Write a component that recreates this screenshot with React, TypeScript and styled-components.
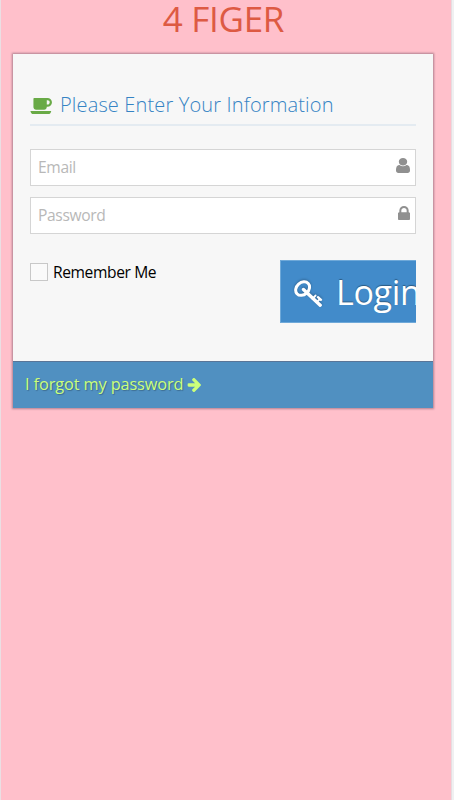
import React from 'react';
import styled, { createGlobalStyle } from 'styled-components';

const GlobalStyle = createGlobalStyle`
  * { box-sizing: border-box; }
  html, body { margin: 0; background: #f0f0f1; }
  body { font-family: "Open Sans", sans-serif; overflow: hidden; }
`;

const Page = styled.main`
  width: 452px;
  height: 800px;
  padding: 0 18px 0 12px;
  border-left: 1px solid #eadfe3;
  border-right: 1px solid #e6dde1;
  background: #ffc0cb;
`;

const Brand = styled.h1`
  height: 54px;
  margin: 0;
  padding: 0 0 0 1px;
  font-size: 35px;
  font-weight: 400;
  line-height: 38px;
  letter-spacing: -0.3px;
  text-align: center;
  color: #dd5a43;
`;

const Card = styled.section`
  width: 420px;
  box-shadow: 0 0 2px 1px rgba(70, 40, 60, 0.42);
`;

const CardBody = styled.form`
  height: 307px;
  padding: 38px 17px 0;
  background: #f7f7f7;
`;

const Heading = styled.h2`
  display: flex;
  align-items: center;
  gap: 8px;
  height: 34px;
  margin: 0 0 23px;
  padding-bottom: 6px;
  border-bottom: 2px solid #e4ebf1;
  font-size: 20px;
  font-weight: 300;
  line-height: 26px;
  letter-spacing: 0.15px;
  white-space: nowrap;
  color: #3583c4;
`;

const Field = styled.label`
  display: flex;
  align-items: center;
  height: 37px;
  margin-bottom: 11px;
  padding: 0 5px 2px 7px;
  border: 1px solid #d5d5d5;
  background: #fff;
  color: #909090;
`;

const Input = styled.input`
  flex: 1;
  min-width: 0;
  padding: 0;
  border: 0;
  outline: 0;
  background: transparent;
  font: 400 15.6px "Open Sans", sans-serif;
  letter-spacing: -0.35px;
  &::placeholder { color: #b8b8b8; opacity: 1; }
`;

const Actions = styled.div`
  display: flex;
  justify-content: space-between;
  margin-top: 26px;
  overflow: hidden;
`;

const Remember = styled.label`
  display: flex;
  align-items: center;
  gap: 5px;
  height: 24px;
  font-size: 15.6px;
  letter-spacing: -0.4px;
  color: #000;
`;

const Checkbox = styled.input`
  appearance: none;
  width: 18px;
  height: 18px;
  margin: 0;
  border: 1px solid #c8c8c8;
  background: #fafafa;
`;

const LoginButton = styled.button`
  display: flex;
  align-items: center;
  gap: 13px;
  width: 136px;
  height: 63px;
  padding: 1px 0 0 13px;
  overflow: hidden;
  border: solid #6fa9d9;
  border-width: 1px 0 1px 1px;
  background: #428bca;
  color: #fff;
  font: 400 34px "Open Sans", sans-serif;
  letter-spacing: -0.3px;
  text-shadow: 0 -1px 1px rgba(0, 0, 0, 0.35);
`;

const Toolbar = styled.footer`
  display: flex;
  align-items: center;
  height: 47px;
  padding: 0 12px 2px;
  border-top: 1px solid #597597;
  background: #5090c1;
`;

const ForgotLink = styled.a`
  display: flex;
  align-items: center;
  gap: 4px;
  font-size: 16.3px;
  letter-spacing: -0.1px;
  color: #cbff7a;
  text-shadow: 1px 1px 1px rgba(0, 0, 0, 0.25);
`;

const Glyph = styled.svg<{ $w: number; $h: number; $drop?: number }>`
  flex: none;
  width: ${(p) => p.$w}px;
  height: ${(p) => p.$h}px;
  margin-top: ${(p) => p.$drop ?? 0}px;
  fill: currentColor;
`;

const CoffeeGlyph = styled(Glyph)`
  color: #69aa46;
`;

const KeyGlyph = styled(Glyph)`
  fill: none;
  stroke: currentColor;
  stroke-linecap: round;
  filter: drop-shadow(0 -1px 1px rgba(0, 0, 0, 0.25));
`;

const coffee = 'M1664 896q0-80-56-136t-136-56h-64v384h64q80 0 136-56t56-136zm-1664 768h1792q0 106-75 181t-181 75h-1280q-106 0-181-75t-75-181zm1856-768q0 159-112.5 271.5t-271.5 112.5h-64v32q0 92-66 158t-158 66h-704q-92 0-158-66t-66-158v-736q0-26 19-45t45-19h1152q159 0 271.5 112.5t112.5 271.5z';
const user = 'M1536 1399q0 109-62.5 187t-150.5 78h-854q-88 0-150.5-78t-62.5-187q0-85 8.5-160.5t31.5-152 58.5-131 94-89 134.5-34.5q131 128 313 128t313-128q76 0 134.5 34.5t94 89 58.5 131 31.5 152 8.5 160.5zm-256-887q0 159-112.5 271.5t-271.5 112.5-271.5-112.5-112.5-271.5 112.5-271.5 271.5-112.5 271.5 112.5 112.5 271.5z';
const lock = 'M640 768h512v-192q0-106-75-181t-181-75-181 75-75 181v192zm832 96v576q0 40-28 68t-68 28h-960q-40 0-68-28t-28-68v-576q0-40 28-68t68-28h32v-192q0-184 132-316t316-132 316 132 132 316v192h32q40 0 68 28t28 68z';
const arrow = 'M1600 960q0 54-37 91l-651 651q-39 37-91 37-51 0-90-37l-75-75q-38-38-38-91t38-91l293-293h-704q-52 0-84.5-37.5t-32.5-90.5v-128q0-53 32.5-90.5t84.5-37.5h704l-293-294q-38-36-38-90t38-90l75-75q38-38 90-38 53 0 91 38l651 651q37 35 37 90z';

export default function App() {
  return (
    <>
      <GlobalStyle />
      <Page>
        <Brand>4 FIGER</Brand>
        <Card>
          <CardBody onSubmit={(e) => e.preventDefault()}>
            <Heading>
              <CoffeeGlyph $w={22} $h={16} $drop={1} viewBox="-40 512 1900 1408" preserveAspectRatio="none"><path d={coffee} /></CoffeeGlyph>
              Please Enter Your Information
            </Heading>
            <Field>
              <Input type="email" placeholder="Email" />
              <Glyph $w={14} $h={15} $drop={-3} viewBox="256 128 1280 1536" preserveAspectRatio="none"><path d={user} /></Glyph>
            </Field>
            <Field>
              <Input type="password" placeholder="Password" />
              <Glyph $w={12} $h={14} $drop={-3} viewBox="320 128 1152 1408" preserveAspectRatio="none"><path d={lock} /></Glyph>
            </Field>
            <Actions>
              <Remember><Checkbox type="checkbox" />Remember Me</Remember>
              <LoginButton type="submit">
                <KeyGlyph $w={29} $h={28} $drop={3} viewBox="0 0 29 28">
                  <ellipse cx="8.6" cy="8.6" rx="7.6" ry="6" transform="rotate(-42 8.6 8.6)" strokeWidth="3" />
                  <path d="M9.5 9.5L26.2 25.2" strokeWidth="3.4" />
                  <path d="M18.5 18.8L21.5 15.6M22.5 22.4L25.8 19.1" strokeWidth="2" />
                  <path d="M24 17.2L27 19.8" strokeWidth="2.4" />
                </KeyGlyph>
                <span>Login</span>
              </LoginButton>
            </Actions>
          </CardBody>
          <Toolbar>
            <ForgotLink>
              I forgot my password
              <Glyph $w={14} $h={14} $drop={1} viewBox="64 190 1536 1550"><path d={arrow} /></Glyph>
            </ForgotLink>
          </Toolbar>
        </Card>
      </Page>
    </>
  );
}
